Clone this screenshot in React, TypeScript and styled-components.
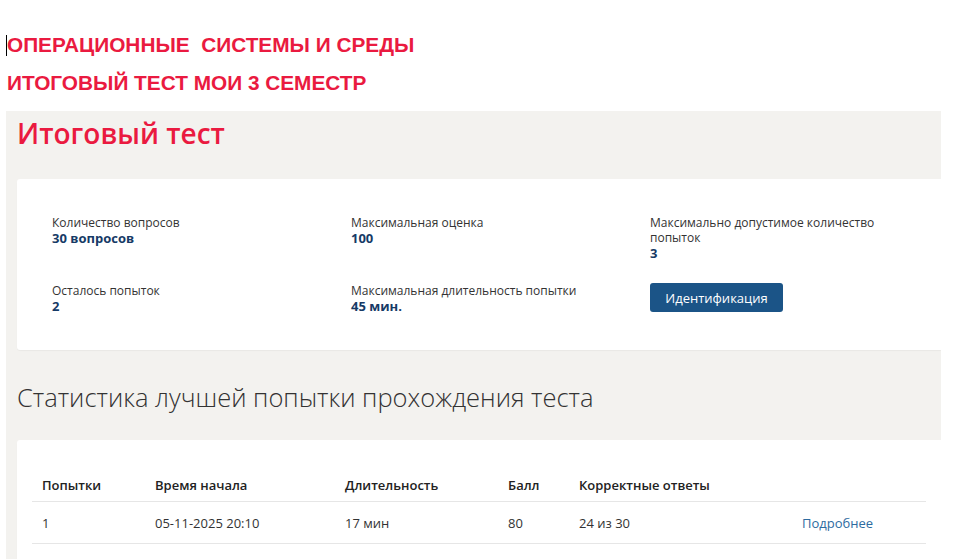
import React from "react";
import styled, { createGlobalStyle } from "styled-components";

const palette = {
  red: "#ea1a40",
  panel: "#f3f2ef",
  white: "#ffffff",
  text: "#333333",
  value: "#163a66",
  button: "#1b5487",
  link: "#2d6b9f",
  line: "#e6e6e6",
};

const GlobalStyle = createGlobalStyle`
  body {
    margin: 0;
    background: ${palette.white};
    font-family: "Open Sans", "Noto Sans", sans-serif;
    color: ${palette.text};
  }
`;

const Page = styled.div`
  width: 955px;
  height: 559px;
  overflow: hidden;
`;

const Header = styled.header`
  padding: 26px 0 0 7px;
  height: 111px;
  box-sizing: border-box;
  position: relative;
`;

const Caret = styled.span`
  position: absolute;
  left: 6px;
  top: 35px;
  width: 1px;
  height: 21px;
  background: #000;
`;

const Headline = styled.div`
  font-family: "Liberation Sans", Arial, sans-serif;
  font-weight: 700;
  font-size: 20.8px;
  line-height: 38px;
  color: ${palette.red};
  white-space: pre;
`;

const Panel = styled.main`
  margin-left: 6px;
  width: 935px;
  background: ${palette.panel};
  padding: 0 0 0 11px;
  box-sizing: border-box;
  height: 448px;
  overflow: hidden;
`;

const Title = styled.h1`
  margin: 0;
  padding-top: 3px;
  height: 68px;
  box-sizing: border-box;
  font-size: 28px;
  font-weight: 600;
  line-height: 38px;
  color: ${palette.red};
`;

const Card = styled.section`
  background: ${palette.white};
  border-radius: 3px 0 0 3px;
  box-shadow: 0 1px 1px rgba(0, 0, 0, 0.04);
`;

const InfoCard = styled(Card)`
  height: 171px;
  padding: 36px 0 0 35px;
  box-sizing: border-box;
  display: grid;
  grid-template-columns: 299px 299px 1fr;
  grid-template-rows: 68px auto;
`;

const Item = styled.div`
  width: 230px;
`;

const Label = styled.div`
  font-size: 12px;
  line-height: 15px;
  color: ${palette.text};
`;

const Value = styled.div`
  font-size: 13px;
  font-weight: 700;
  line-height: 16px;
  color: ${palette.value};
`;

const Button = styled.button`
  width: 133px;
  height: 29px;
  border: none;
  border-radius: 3px;
  background: ${palette.button};
  color: ${palette.white};
  font-family: "Open Sans", "Noto Sans", sans-serif;
  font-size: 13px;
  padding: 0;
  cursor: pointer;
`;

const Subtitle = styled.h2`
  margin: 0;
  height: 90px;
  padding-top: 31px;
  box-sizing: border-box;
  font-size: 25.5px;
  font-weight: 300;
  line-height: 32px;
  color: ${palette.text};
`;

const TableCard = styled(Card)`
  padding: 28px 15px 0 15px;
  height: 130px;
  box-sizing: border-box;
`;

const Table = styled.table`
  width: 894px;
  border-collapse: collapse;
  font-size: 13px;
`;

const Th = styled.th<{ $w?: number }>`
  text-align: left;
  font-weight: 600;
  color: #222;
  padding: 8px 10px 7px;
  height: 17px;
  border-bottom: 1px solid ${palette.line};
  width: ${(p) => (p.$w ? `${p.$w - 20}px` : "auto")};
`;

const Td = styled.td`
  padding: 12px 10px 11px;
  color: ${palette.text};
  border-bottom: 1px solid ${palette.line};
`;

const Link = styled.a`
  color: ${palette.link};
  text-decoration: none;
`;

const info = [
  { label: "Количество вопросов", value: "30 вопросов" },
  { label: "Максимальная оценка", value: "100" },
  { label: "Максимально допустимое количество попыток", value: "3" },
  { label: "Осталось попыток", value: "2" },
  { label: "Максимальная длительность попытки", value: "45 мин." },
];

const columns = [
  { title: "Попытки", w: 113 },
  { title: "Время начала", w: 190 },
  { title: "Длительность", w: 163 },
  { title: "Балл", w: 71 },
  { title: "Корректные ответы", w: 223 },
  { title: "" },
];

const App: React.FC = () => {
  return (
    <Page>
      <GlobalStyle />
      <Header>
        <Caret />
        <Headline>{"ОПЕРАЦИОННЫЕ  СИСТЕМЫ И СРЕДЫ"}</Headline>
        <Headline>ИТОГОВЫЙ ТЕСТ МОИ 3 СЕМЕСТР</Headline>
      </Header>
      <Panel>
        <Title>Итоговый тест</Title>
        <InfoCard>
          {info.map((it) => (
            <Item key={it.label}>
              <Label>{it.label}</Label>
              <Value>{it.value}</Value>
            </Item>
          ))}
          <div>
            <Button>Идентификация</Button>
          </div>
        </InfoCard>
        <Subtitle>Статистика лучшей попытки прохождения теста</Subtitle>
        <TableCard>
          <Table>
            <thead>
              <tr>
                {columns.map((c, i) => (
                  <Th key={i} $w={c.w}>
                    {c.title}
                  </Th>
                ))}
              </tr>
            </thead>
            <tbody>
              <tr>
                <Td>1</Td>
                <Td>05-11-2025 20:10</Td>
                <Td>17 мин</Td>
                <Td>80</Td>
                <Td>24 из 30</Td>
                <Td>
                  <Link href="#">Подробнее</Link>
                </Td>
              </tr>
            </tbody>
          </Table>
        </TableCard>
      </Panel>
    </Page>
  );
};

export default App;
